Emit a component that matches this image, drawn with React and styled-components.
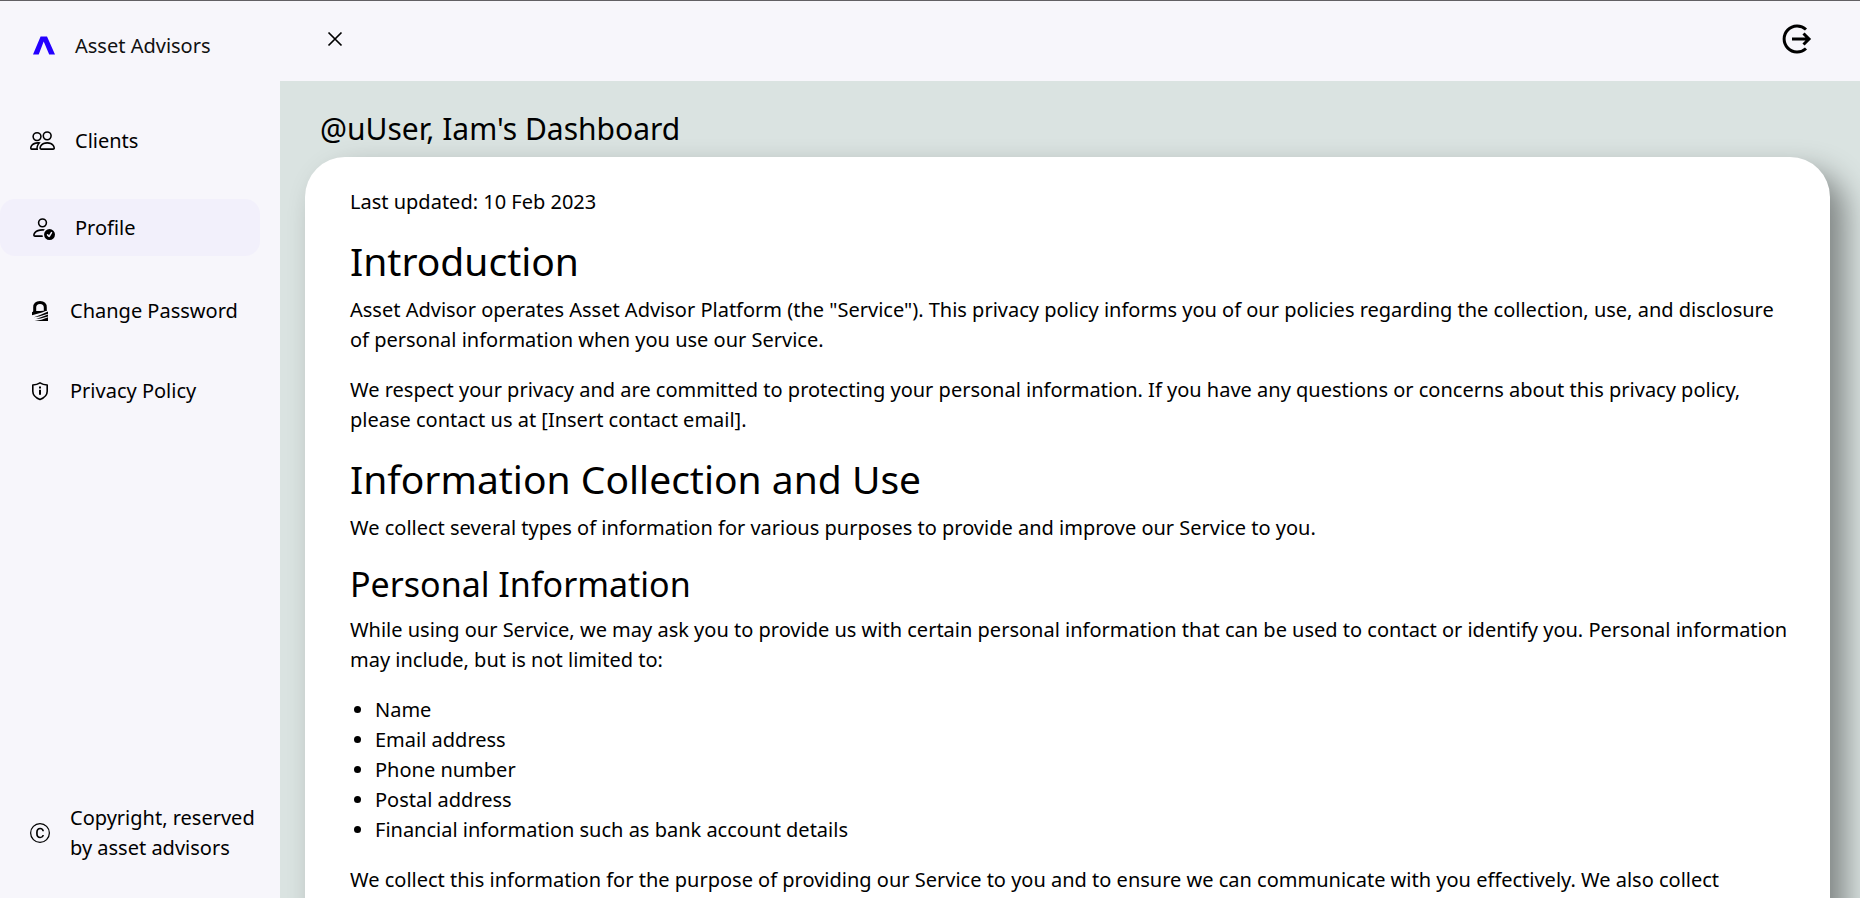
import React from "react";
import styled, { createGlobalStyle } from "styled-components";
import { BsPeople, BsPersonCheck, BsCCircle } from "react-icons/bs";

const GlobalStyle = createGlobalStyle`
  *, *::before, *::after { box-sizing: border-box; }
  body {
    margin: 0;
    color: #000;
    font-family: "Noto Sans", "Open Sans", sans-serif;
    font-size: 20px;
    line-height: 30px;
  }
`;

const Shell = styled.div`
  display: flex;
  height: 100vh;
  overflow: hidden;
  background: #f7f6fb;
  border-top: 1px solid #626064;
`;

const Sidebar = styled.aside`
  display: flex;
  flex: none;
  flex-direction: column;
  width: 280px;
  padding: 30px 0 35px;
`;

const Brand = styled.a`
  display: flex;
  align-items: center;
  gap: 20px;
  padding-left: 30px;
  color: #111;
  text-decoration: none;
`;

const Nav = styled.nav`
  display: flex;
  flex: 1;
  flex-direction: column;
  gap: 30px;
  margin-top: 51px;
  padding-right: 20px;
`;

const NavLink = styled.a`
  display: flex;
  align-items: center;
  gap: 20px;
  height: ${(p) => (p.$compact ? 50 : 57)}px;
  padding-left: 30px;
  border-radius: 15px;
  background: ${(p) => (p.$active ? "#f2f0fb" : "transparent")};
  color: #000;
  text-decoration: none;
  white-space: nowrap;
`;

const Copyright = styled.footer`
  display: flex;
  align-items: center;
  gap: 20px;
  padding: 0 20px 0 30px;

  svg { flex: none; }
  p { margin: 0; white-space: nowrap; }
`;

const Column = styled.div`
  display: flex;
  flex: 1;
  flex-direction: column;
  min-width: 0;
`;

const TopBar = styled.header`
  display: flex;
  flex: none;
  align-items: center;
  justify-content: space-between;
  height: 80px;
  padding: 0 45px 4px;
`;

const IconButton = styled.button`
  display: flex;
  padding: 0;
  border: 0;
  background: none;
  color: #000;
  cursor: pointer;
`;

const Main = styled.main`
  flex: 1;
  min-height: 0;
  overflow: auto;
  scrollbar-width: none;
  padding: 30px 30px 60px 25px;
  background: #dae3e1;
`;

const PageTitle = styled.h1`
  margin: 0 0 10px 15px;
  font-size: 30px;
  font-weight: 400;
  line-height: 36px;
`;

const Card = styled.article`
  padding: 30px 40px 30px 45px;
  border-radius: 40px;
  background: #fff;
  box-shadow: 15px 15px 30px rgba(0, 0, 0, 0.42);

  p { margin: 0 0 20px; }
`;

const SectionTitle = styled.h2`
  margin: 0 0 10px;
  font-size: 39px;
  font-weight: 400;
  line-height: 48px;
`;

const SubTitle = styled.h3`
  margin: 0 0 10px;
  font-size: 34px;
  font-weight: 400;
  line-height: 42px;
`;

const List = styled.ul`
  margin: 0 0 20px;
  padding-left: 25px;
`;

const LogoIcon = () => (
  <svg width="25" height="25" viewBox="0 0 25 25" aria-hidden="true">
    <path fill="#2400ff" d="M3 20.500 10.600 2.500h6.400L25 20.500h-5.800L13.700 7.500 8.700 20.500z" />
  </svg>
);

const LockIcon = () => (
  <svg width="20" height="20" viewBox="0 0 20 20" aria-hidden="true">
    <path fill="none" stroke="#000" strokeWidth="3" d="M4.700 11V6.600C4.700 3.300 6.800 1.600 10 1.600s5.300 1.700 5.300 5V10" />
    <path d="M2 11.200 4 10h6l6.800-.6-4.800 2.200L2 14.200z" />
    <path d="M18 10.600v2.200L9 15.400l-5 .8 6-2.300zM18 13.600v2L10.500 17.500 6 18l5.500-2zM18 16.300V20H4.500l7-1.300z" />
  </svg>
);

const ShieldInfoIcon = () => (
  <svg width="20" height="20" viewBox="0 0 20 20" aria-hidden="true">
    <path
      fill="none"
      stroke="#000"
      strokeWidth="1.6"
      strokeLinejoin="round"
      d="M10 1.800c2.200 1.400 4.500 2 7.200 2.200v6.200c0 3.800-3 6.600-7.200 8.200-4.200-1.600-7.200-4.400-7.200-8.200V4C5.500 3.800 7.800 3.200 10 1.800z"
    />
    <path d="M9 5.500h2v2H9zM9 8.800h2v5H9z" />
  </svg>
);

const CloseIcon = () => (
  <svg width="20" height="20" viewBox="0 0 20 20" aria-hidden="true">
    <path fill="none" stroke="currentColor" strokeWidth="1.7" d="m3.500 3.500 13 13m0-13-13 13" />
  </svg>
);

const LogoutIcon = () => (
  <svg width="36" height="36" viewBox="0 0 36 36" aria-hidden="true">
    <path
      fill="none"
      stroke="currentColor"
      strokeWidth="3"
      d="M27 8.500A13 13 0 1 0 27 27.500M13 18h17M24.500 12.500l5.500 5.500-5.500 5.500"
    />
  </svg>
);

export default function App() {
  return (
    <>
      <GlobalStyle />
      <Shell>
        <Sidebar>
          <Brand href="#">
            <LogoIcon />
            Asset Advisors
          </Brand>
          <Nav aria-label="Main">
            <NavLink href="#clients">
              <BsPeople size={25} />
              Clients
            </NavLink>
            <NavLink href="#profile" $active aria-current="page">
              <BsPersonCheck size={25} />
              Profile
            </NavLink>
            <NavLink href="#password" $compact>
              <LockIcon />
              Change Password
            </NavLink>
            <NavLink href="#privacy" $compact>
              <ShieldInfoIcon />
              Privacy Policy
            </NavLink>
          </Nav>
          <Copyright>
            <BsCCircle size={20} />
            <p>
              Copyright, reserved
              <br />
              by asset advisors
            </p>
          </Copyright>
        </Sidebar>
        <Column>
          <TopBar>
            <IconButton type="button" aria-label="Close menu">
              <CloseIcon />
            </IconButton>
            <IconButton type="button" aria-label="Log out">
              <LogoutIcon />
            </IconButton>
          </TopBar>
          <Main>
            <PageTitle>@uUser, Iam's Dashboard</PageTitle>
            <Card>
              <p>Last updated: 10 Feb 2023</p>
              <SectionTitle>Introduction</SectionTitle>
              <p>
                Asset Advisor operates Asset Advisor Platform (the "Service"). This privacy policy informs you of our
                policies regarding the collection, use, and disclosure of personal information when you use our Service.
              </p>
              <p>
                We respect your privacy and are committed to protecting your personal information. If you have any
                questions or concerns about this privacy policy, please contact us at [Insert contact email].
              </p>
              <SectionTitle>Information Collection and Use</SectionTitle>
              <p>
                We collect several types of information for various purposes to provide and improve our Service to you.
              </p>
              <SubTitle>Personal Information</SubTitle>
              <p>
                While using our Service, we may ask you to provide us with certain personal information that can be used
                to contact or identify you. Personal information may include, but is not limited to:
              </p>
              <List>
                <li>Name</li>
                <li>Email address</li>
                <li>Phone number</li>
                <li>Postal address</li>
                <li>Financial information such as bank account details</li>
              </List>
              <p>
                We collect this information for the purpose of providing our Service to you and to ensure we can
                communicate with you effectively. We also collect
              </p>
            </Card>
          </Main>
        </Column>
      </Shell>
    </>
  );
}
